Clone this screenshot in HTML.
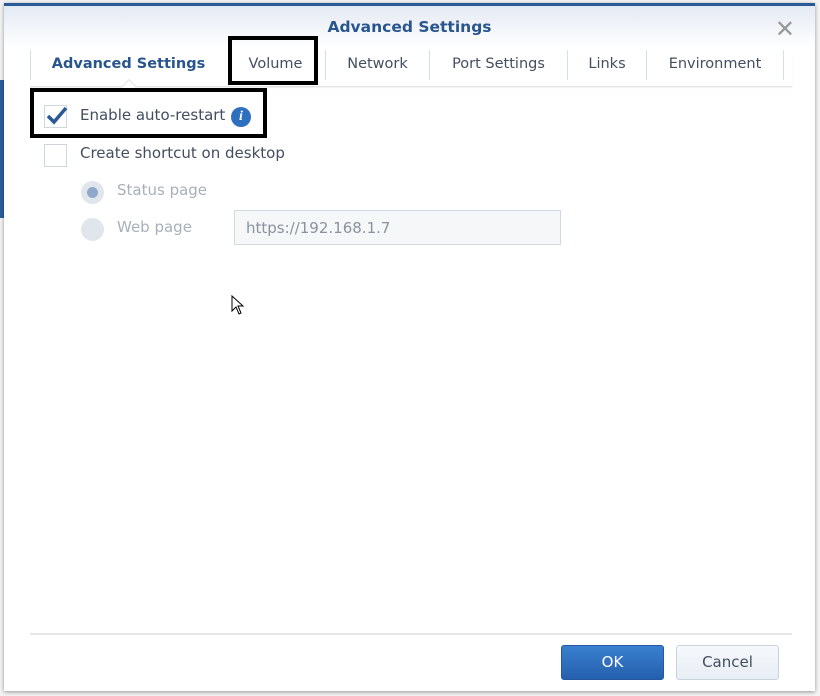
<!DOCTYPE html>
<html><head><meta charset="utf-8"><style>
*{margin:0;padding:0;box-sizing:border-box}
body{width:820px;height:696px;overflow:hidden;background:#fff;font-family:"DejaVu Sans",sans-serif;position:relative}
.bg{position:absolute;left:0;top:0;width:820px;height:696px;background:#f4f4f4}
.bgblue{position:absolute;left:0;top:80px;width:6px;height:138px;background:#2b5f9e}
.dlg{position:absolute;left:4px;top:3px;width:811px;height:688px;background:#fff;border-top:3px solid #2a5a96;box-shadow:0 1px 4px rgba(0,0,0,.4)}
.hdr{position:absolute;left:0;top:0;width:100%;height:42px;background:linear-gradient(#e4eaf3,#fff)}
.title{position:absolute;left:0;width:100%;top:12px;text-align:center;font-weight:bold;font-size:15.5px;color:#29558f}
.close{position:absolute;right:20px;top:9px;font-size:24px;color:#999;font-family:"Liberation Sans",sans-serif}
.tabs{position:absolute;left:26px;top:44px;height:37px;width:762px;border-bottom:1px solid #e3e3e3;box-shadow:0 1px 1px #eee}
.tab{position:absolute;top:0;height:30px;line-height:29px;font-size:14.5px;color:#434e5e;text-align:center;border-left:1px solid #d6e0ea}
.act{font-weight:bold;color:#29558f}
.t{position:absolute;font-size:15px;color:#434e5e}
.g{color:#a8b0ba}
.cb{position:absolute;width:23px;height:23px;border:1px solid #cfd6de;background:#fff}
.rd{position:absolute;width:23px;height:23px;border-radius:50%;background:#e1e6ec}
.box{position:absolute;border:4px solid #000}
</style></head><body>
<div class="bg"></div><div class="bgblue"></div>
<div class="dlg">
<div class="hdr"></div>
<div class="title">Advanced Settings</div>
<div class="close">✕</div>
<div class="tabs">
<div class="tab act" style="left:0;width:196px;">Advanced Settings</div>
<div class="tab" style="left:196px;width:99px;border-left:none">Volume</div>
<div class="tab" style="left:295px;width:104px">Network</div>
<div class="tab" style="left:399px;width:138px">Port Settings</div>
<div class="tab" style="left:537px;width:79px">Links</div>
<div class="tab" style="left:616px;width:138px;border-right:1px solid #d6e0ea">Environment</div>
</div>
<div style="position:absolute;left:120px;top:75px;width:10px;height:10px;background:#fff;border-left:1px solid #e3e3e3;border-top:1px solid #e3e3e3;transform:rotate(45deg)"></div>
<div class="cb" style="left:40px;top:99px"></div>
<svg style="position:absolute;left:40px;top:97px" width="26" height="24"><path d="M4 13 L10 19 L22 5" stroke="#2a5a96" stroke-width="3.5" fill="none"/></svg>
<div class="t" style="left:76px;top:100px">Enable auto-restart</div>
<div style="position:absolute;left:227px;top:101px;width:20px;height:20px;border-radius:50%;background:#2f6fbf;color:#fff;font:italic bold 14px 'Liberation Serif',serif;text-align:center;line-height:20px">i</div>
<div class="cb" style="left:40px;top:138px"></div>
<div class="t" style="left:76px;top:138px">Create shortcut on desktop</div>
<div class="rd" style="left:77px;top:175px"></div>
<div style="position:absolute;left:83px;top:181px;width:11px;height:11px;border-radius:50%;background:#8fa8cc"></div>
<div class="t g" style="left:113px;top:175px">Status page</div>
<div class="rd" style="left:77px;top:212px"></div>
<div class="t g" style="left:113px;top:212px">Web page</div>
<div style="position:absolute;left:230px;top:204px;width:327px;height:35px;border:1px solid #d0d8e0;background:#f5f7f9;font-size:15px;color:#8a939d;padding:8px 11px">https://192.168.1.7</div>
<div class="box" style="left:224px;top:30px;width:90px;height:49px"></div>
<div class="box" style="left:26px;top:82px;width:237px;height:50px"></div>
<div style="position:absolute;left:26px;top:627px;width:762px;height:2px;background:#e6e6e6"></div>
<div style="position:absolute;left:557px;top:639px;width:103px;height:35px;border-radius:3px;background:linear-gradient(#3a7fd0,#2560ad);border:1px solid #2458a0;color:#fff;font-size:15px;text-align:center;line-height:33px">OK</div>
<div style="position:absolute;left:672px;top:639px;width:103px;height:35px;border-radius:3px;background:linear-gradient(#f6f8fb,#e8eef5);border:1px solid #c9d3de;color:#434e5e;font-size:15px;text-align:center;line-height:33px">Cancel</div>
</div>
<svg style="position:absolute;left:231px;top:295px" width="14" height="20"><path d="M1 1 L1 16 L5 12 L8 19 L10 18 L7 11 L12 11 Z" fill="#fff" stroke="#000" stroke-width="1"/></svg>
</body></html>
